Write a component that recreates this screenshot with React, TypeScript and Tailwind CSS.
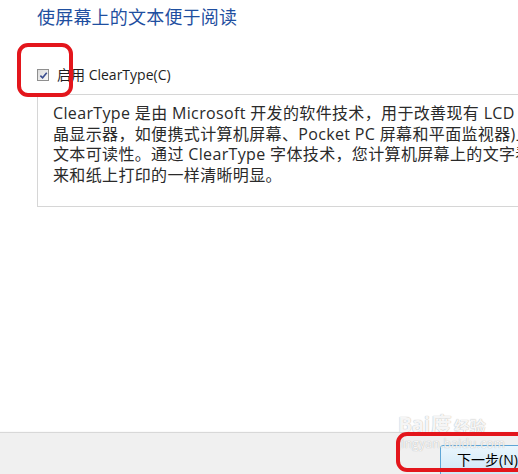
const font = {
  fontFamily: '"Open Sans", "Noto Sans CJK SC", sans-serif',
};

export default function App() {
  return (
    <div
      className="relative w-[518px] h-[474px] overflow-hidden bg-white flex flex-col text-[#1e1e1e]"
      style={font}
    >
      {/* main content */}
      <div className="flex-1 pl-[37px] pt-[5px]">
        <h1 className="text-[18px] leading-[24px] text-[#1f4fa0] font-normal tracking-[0.2px]">
          使屏幕上的文本便于阅读
        </h1>

        <label className="mt-[37px] flex items-center gap-[8px] text-[14px] leading-[18px]">
          <span className="w-[12px] h-[12px] border border-[#8f8f8f] bg-gradient-to-br from-[#dcdcdc] to-[#f8f8f8] flex items-center justify-center">
            <svg viewBox="0 0 10 10" className="w-[9px] h-[9px]">
              <path
                d="M1.5 5.2 L4 7.6 L8.6 2"
                fill="none"
                stroke="#3a4d8f"
                strokeWidth="1.8"
              />
            </svg>
          </span>
          <span>启用 ClearType(C)</span>
        </label>

        <div className="mt-[10px] h-[113px] border-t border-l border-b border-[#d6d6d6] pl-[15px] pt-[8px] text-[16px] leading-[20.5px] tracking-[0.35px] text-[#2a2a2a] whitespace-nowrap overflow-hidden">
          <div>ClearType 是由 Microsoft 开发的软件技术，用于改善现有 LCD（液</div>
          <div>晶显示器，如便携式计算机屏幕、Pocket PC 屏幕和平面监视器)上的</div>
          <div>文本可读性。通过 ClearType 字体技术，您计算机屏幕上的文字看起</div>
          <div>来和纸上打印的一样清晰明显。</div>
        </div>
      </div>

      {/* bottom bar */}
      <div className="h-[42px] border-t border-[#d8d8d8] bg-[#f0f0f0] shadow-[0_-1px_0_#fafafa] flex justify-end items-start pt-[12px]">
        <button className="w-[86px] h-[32px] -mr-[8px] shrink-0 rounded-[3px] border border-[#5ea6d6] bg-gradient-to-b from-[#eaf6fd] to-[#cde7f6] text-[14px] text-black text-left pl-[16px] pb-[3px]">
          下一步(N)
        </button>
      </div>

      {/* watermark */}
      <div className="absolute left-[398px] top-[414px] pointer-events-none text-white/90 [text-shadow:0_0_1px_#9a9a9a]">
        <div className="flex items-end gap-[1px] leading-none">
          <span className="text-[21px] font-bold tracking-[-0.5px]">Bai</span>
          <span className="text-[21px] font-bold">度</span>
          <span className="text-[16px] font-bold ml-[1px]">经验</span>
        </div>
        <div className="text-[12px] leading-[14px] mt-[2px] tracking-[0.3px]">
          jingyan.baidu.com
        </div>
      </div>

      {/* red annotation marks */}
      <div className="absolute left-[17px] top-[43px] w-[56px] h-[54px] rounded-[11px] border-[4px] border-[#e3161c]" />
      <div className="absolute left-[396px] top-[432px] w-[140px] h-[40px] rounded-[11px] border-[4px] border-[#e3161c]" />
    </div>
  );
}
